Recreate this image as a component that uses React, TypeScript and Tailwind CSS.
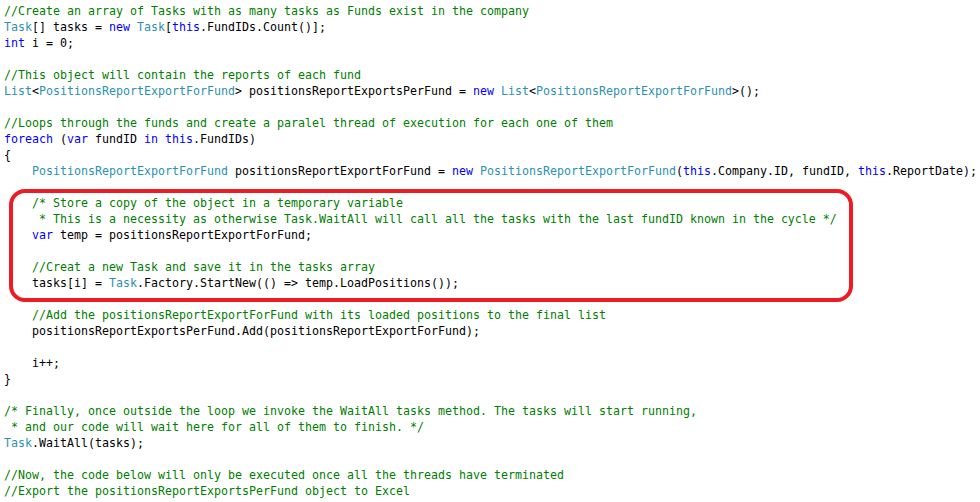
type Kind = "t" | "c" | "k" | "y";
type Token = [Kind, string];

const colors: Record<Kind, string> = {
  t: "text-black",
  c: "text-[#008000]",
  k: "text-[#0000ff]",
  y: "text-[#2b91af]",
};

const lines: Token[][] = [
  [["c", "//Create an array of Tasks with as many tasks as Funds exist in the company"]],
  [["y", "Task"], ["t", "[] tasks = "], ["k", "new"], ["t", " "], ["y", "Task"], ["t", "["], ["k", "this"], ["t", ".FundIDs.Count()];"]],
  [["k", "int"], ["t", " i = 0;"]],
  [],
  [["c", "//This object will contain the reports of each fund"]],
  [
    ["y", "List"], ["t", "<"], ["y", "PositionsReportExportForFund"], ["t", "> positionsReportExportsPerFund = "],
    ["k", "new"], ["t", " "], ["y", "List"], ["t", "<"], ["y", "PositionsReportExportForFund"], ["t", ">();"],
  ],
  [],
  [["c", "//Loops through the funds and create a paralel thread of execution for each one of them"]],
  [["k", "foreach"], ["t", " ("], ["k", "var"], ["t", " fundID "], ["k", "in"], ["t", " "], ["k", "this"], ["t", ".FundIDs)"]],
  [["t", "{"]],
  [
    ["t", "    "], ["y", "PositionsReportExportForFund"], ["t", " positionsReportExportForFund = "], ["k", "new"], ["t", " "],
    ["y", "PositionsReportExportForFund"], ["t", "("], ["k", "this"], ["t", ".Company.ID, fundID, "], ["k", "this"], ["t", ".ReportDate);"],
  ],
  [],
  [["t", "    "], ["c", "/* Store a copy of the object in a temporary variable"]],
  [["t", "    "], ["c", " * This is a necessity as otherwise Task.WaitAll will call all the tasks with the last fundID known in the cycle */"]],
  [["t", "    "], ["k", "var"], ["t", " temp = positionsReportExportForFund;"]],
  [],
  [["t", "    "], ["c", "//Creat a new Task and save it in the tasks array"]],
  [["t", "    tasks[i] = "], ["y", "Task"], ["t", ".Factory.StartNew(() => temp.LoadPositions());"]],
  [],
  [["t", "    "], ["c", "//Add the positionsReportExportForFund with its loaded positions to the final list"]],
  [["t", "    positionsReportExportsPerFund.Add(positionsReportExportForFund);"]],
  [],
  [["t", "    i++;"]],
  [["t", "}"]],
  [],
  [["c", "/* Finally, once outside the loop we invoke the WaitAll tasks method. The tasks will start running,"]],
  [["c", " * and our code will wait here for all of them to finish. */"]],
  [["y", "Task"], ["t", ".WaitAll(tasks);"]],
  [],
  [["c", "//Now, the code below will only be executed once all the threads have terminated"]],
  [["c", "//Export the positionsReportExportsPerFund object to Excel"]],
];

export default function App() {
  return (
    <div className="relative w-[980px] h-[502px] overflow-hidden bg-white">
      <pre className="pl-[4px] pt-[3px] font-['DejaVu_Sans_Mono','Liberation_Mono',monospace] text-[11.63px] leading-[16px] whitespace-pre">
        {lines.map((line, i) => (
          <div key={i} className="h-[16px]">
            {line.map(([kind, text], j) => (
              <span key={j} className={colors[kind]}>
                {text}
              </span>
            ))}
          </div>
        ))}
      </pre>
      {/* highlight annotation */}
      <div className="absolute left-[9px] top-[189px] w-[844px] h-[113px] border-[4px] border-[#ed1c24] rounded-[16px] pointer-events-none" />
    </div>
  );
}
